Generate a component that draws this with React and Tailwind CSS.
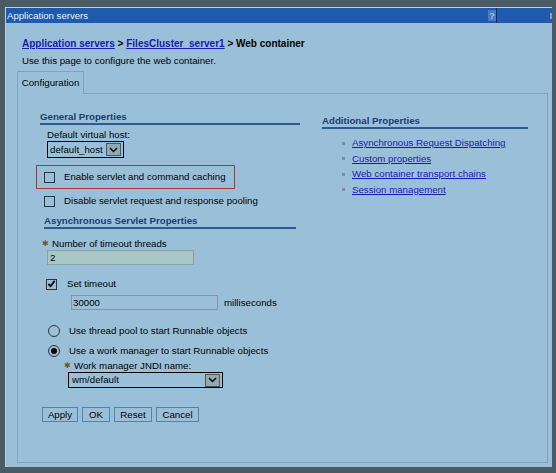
import React from "react";

const font = { fontFamily: '"Liberation Sans", Arial, sans-serif' };

function Check({ checked }) {
  return (
    <span className="inline-flex w-[11px] h-[11px] border border-[#333] bg-[#9ac0d9] items-center justify-center shrink-0">
      {checked && (
        <svg width="10" height="10" viewBox="0 0 10 10">
          <path d="M1.5 5 L4 7.5 L8.5 1.5" stroke="#000" strokeWidth="2" fill="none" />
        </svg>
      )}
    </span>
  );
}

function Radio({ checked }) {
  return (
    <span className="inline-flex w-[12px] h-[12px] rounded-full border border-[#333] bg-[#9ac0d9] items-center justify-center shrink-0">
      {checked && <span className="w-[6px] h-[6px] rounded-full bg-black" />}
    </span>
  );
}

function DropBtn() {
  return (
    <span className="w-[15px] h-[13px] bg-[#8fa9b6] border border-[#555] flex items-center justify-center">
      <svg width="9" height="6" viewBox="0 0 9 6">
        <path d="M1 1 L4.5 4.5 L8 1" stroke="#000" strokeWidth="1.5" fill="none" />
      </svg>
    </span>
  );
}

function Btn({ children, w }) {
  return (
    <span className={`h-[15px] ${w} bg-[#9ac0d9] border border-[#5a7fa8] flex items-center justify-center text-black`}>
      {children}
    </span>
  );
}

function Link({ children }) {
  return <span className="text-[#1a1ab0] underline">{children}</span>;
}

export default function App() {
  return (
    <div className="w-[556px] h-[473px] bg-[#4b5b66] pt-[7px] pl-[5px] pr-[4px] pb-[6px] text-[9.7px] leading-[12px] text-black" style={font}>
      <div className="h-full bg-[#9ac0d9] border-l border-t border-[#b4d2e6] flex flex-col">
        <div className="h-[15px] shrink-0 bg-[#1f5aad] flex items-center text-[9.6px] text-[#e8eef8] relative">
          <span className="pl-[1px]">Application servers</span>
          <span className="absolute left-[482px] top-[2px] w-[8px] h-[11px] bg-[#4a7cc0] text-[9px] text-[#9ec0e8] flex items-center justify-center font-bold">?</span>
          <span className="absolute left-[490px] top-0 w-px h-[15px] bg-[#0c2f66]" />
          <span className="absolute right-0 top-[5px] w-[2px] h-[6px] bg-[#7aa0d0]" />
        </div>
        <div className="pl-[16px] pt-[15px] font-bold text-[10px]">
          <Link>Application servers</Link> &gt; <Link>FilesCluster_server1</Link> &gt; Web container
        </div>
        <div className="pl-[16px] pt-[5px]">Use this page to configure the web container.</div>
        <div className="ml-[11px] mr-[4px] mt-[4px] flex-1 mb-[4px] flex flex-col">
          <div className="flex">
            <div className="h-[23px] w-[67px] border-l border-t border-r border-[#7fa2c8] flex items-center justify-center">Configuration</div>
            <div className="flex-1 border-b border-[#7fa2c8]" />
          </div>
          <div className="flex-1 border-l border-r border-b border-[#7fa2c8] flex pt-[17px]">
            <div className="w-[260px] ml-[22px] flex flex-col">
              <div className="font-bold text-[#1b3c70] border-b-2 border-[#2d5a94]">General Properties</div>
              <div className="pl-[7px] pt-[4px]">Default virtual host:</div>
              <div className="ml-[7px] w-[77px] h-[17px] border border-black flex items-center pl-[2px] gap-[3px]">
                <span>default_host</span>
                <DropBtn />
              </div>
              <div className="mt-[7px] -ml-[4px] w-[199px] h-[24px] border border-[#b03434] flex items-center pl-[7px] gap-[9px]">
                <Check />
                <span>Enable servlet and command caching</span>
              </div>
              <div className="mt-[6px] ml-[4px] flex items-center gap-[9px]">
                <Check />
                <span>Disable servlet request and response pooling</span>
              </div>
              <div className="mt-[8px] ml-[4px] w-[252px] font-bold text-[#1b3c70] border-b-2 border-[#2d5a94]">Asynchronous Servlet Properties</div>
              <div className="mt-[9px] ml-[2px] flex items-center gap-[3px]">
                <span className="text-[#6b5a20] text-[8px]">✱</span>
                <span>Number of timeout threads</span>
              </div>
              <div className="ml-[7px] w-[147px] h-[15px] bg-[#a9c6c7] border border-[#8aa0a8] flex items-center pl-[2px]">2</div>
              <div className="mt-[13px] ml-[6px] flex items-center gap-[10px]">
                <Check checked />
                <span>Set timeout</span>
              </div>
              <div className="mt-[5px] ml-[31px] flex items-center gap-[6px]">
                <span className="w-[147px] h-[15px] bg-[#9ac0d9] border border-[#7f96a6] flex items-center pl-[1px]">30000</span>
                <span>milliseconds</span>
              </div>
              <div className="mt-[15px] ml-[8px] flex items-center gap-[9px]">
                <Radio />
                <span>Use thread pool to start Runnable objects</span>
              </div>
              <div className="mt-[8px] ml-[8px] flex items-center gap-[9px]">
                <Radio checked />
                <span>Use a work manager to start Runnable objects</span>
              </div>
              <div className="mt-[3px] ml-[24px] flex items-center gap-[3px]">
                <span className="text-[#6b5a20] text-[8px]">✱</span>
                <span>Work manager JNDI name:</span>
              </div>
              <div className="ml-[28px] w-[155px] h-[16px] border border-black flex items-center pl-[3px] justify-between pr-[2px]">
                <span>wm/default</span>
                <DropBtn />
              </div>
              <div className="mt-[19px] ml-[2px] flex gap-[4px]">
                <Btn w="w-[36px]">Apply</Btn>
                <Btn w="w-[28px]">OK</Btn>
                <Btn w="w-[38px]">Reset</Btn>
                <Btn w="w-[43px]">Cancel</Btn>
              </div>
            </div>
            <div className="ml-[22px] w-[206px] pt-[4px] flex flex-col">
              <div className="font-bold text-[#1b3c70] border-b-2 border-[#2d5a94]">Additional Properties</div>
              <div className="pl-[20px] pt-[8px] flex flex-col gap-[3px]">
                {["Asynchronous Request Dispatching", "Custom properties", "Web container transport chains", "Session management"].map((t) => (
                  <div key={t} className="flex items-center gap-[7px] h-[12.5px]">
                    <span className="w-[3px] h-[3px] bg-[#7a8fa0]" />
                    <Link>{t}</Link>
                  </div>
                ))}
              </div>
            </div>
          </div>
        </div>
      </div>
    </div>
  );
}
